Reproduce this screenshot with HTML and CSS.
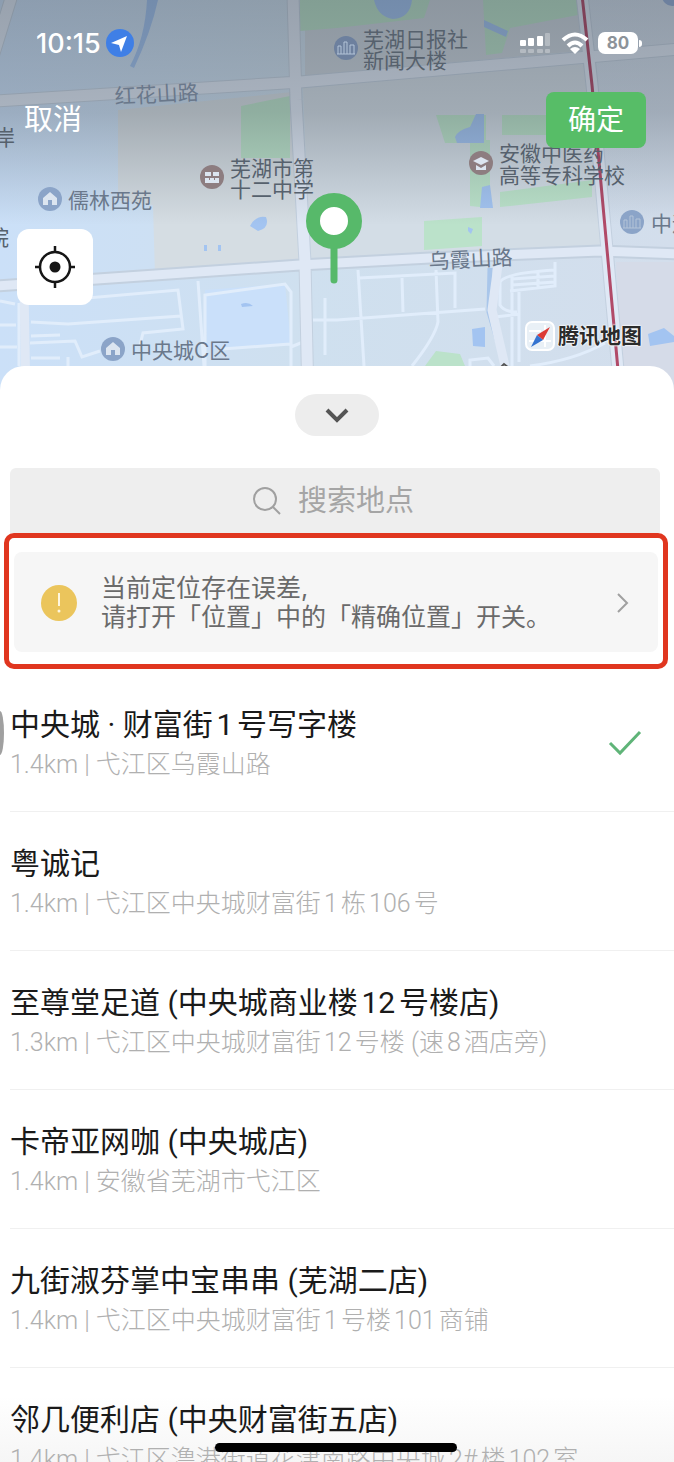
FILE: index.html
```html
<!DOCTYPE html>
<html lang="zh-CN">
<head>
  <meta charset="UTF-8" />
  <meta name="viewport" content="width=device-width, initial-scale=1.0"/>
  <title>选择位置</title>
  <link rel="stylesheet" href="styles.css">
</head>
<body>
  <div class="app">
    <section class="map">
      <svg class="map-canvas" viewBox="0 0 674 400" preserveAspectRatio="xMidYMin slice" aria-hidden="true">
        <defs>
          <linearGradient id="ground" x1="0" x2="1" y1="0" y2="0">
            <stop offset="0" stop-color="#cbe0f8"/>
            <stop offset="0.45" stop-color="#cfe0ef"/>
            <stop offset="1" stop-color="#d3deec"/>
          </linearGradient>
          <linearGradient id="shade" x1="0" x2="0" y1="0" y2="1">
            <stop offset="0" stop-color="#26303a" stop-opacity="0.38"/>
            <stop offset="0.5" stop-color="#26303a" stop-opacity="0.29"/>
            <stop offset="1" stop-color="#26303a" stop-opacity="0"/>
          </linearGradient>
        </defs>
        <rect width="674" height="400" fill="url(#ground)"/>

        <!-- blocks -->
        <path d="M118 110L292 92 299 262 155 276 153 205 118 200z" fill="#d5dde3"/>
        <path d="M303 88L595 60 604 246 310 262z" fill="#d3dde6"/>
        <path d="M305 0H580L590 50 305 76z" fill="#ccd5de"/>
        <path d="M616 262H674V400H622z" fill="#d5dbe8"/>
        <path d="M205 290L285 284 291 345 207 350z" fill="#cae0fa"/>

        <!-- parks -->
        <g fill="#bbe2ca">
          <path d="M241 106L290 96V158H241z"/>
          <path d="M300 0H430L424 18 337 28 300 31z"/>
          <path d="M483 0H578V15L510 28 502 53 486 55z"/>
          <path d="M436 115H486V143H445z"/>
          <path d="M502 115H556V135H502z"/>
          <path d="M424 221L482 217V246L424 250z"/>
          <path d="M470 140H490V208L470 206z"/>
          <path d="M500 192L592 180V197L500 207z"/>
          <path d="M425 366L436 351 460 354 465 366z"/>
        </g>

        <!-- water -->
        <g fill="#a3c4f1">
          <path d="M147 0H158Q151 32 134 68L130 66Q145 38 147 0z"/>
          <path d="M374 0H412Q410 18 393 19 378 17 374 0z"/>
          <path d="M484 20L508 31 506 37 484 27z"/>
          <path d="M455 137Q458 130 470 127L476 114H484V143H457z"/>
          <path d="M482 187L490 185 493 208 480 208z"/>
          <path d="M250 226Q256 215 266 217 270 228 258 231z"/>
          <path d="M204 245h3v6h-3zM218 245h3v6h-3zM468 227l5 2-2 5-3-3zM241 304q7-3 12 2l-11 1z"/>
          <path d="M472 329L485 327V347L473 346z"/>
          <path d="M648 334L664 328 674 336V342L650 346z"/>
        </g>
        <path d="M490 268L489 312 505 366" fill="none" stroke="#a9c6ea" stroke-width="5"/>

        <!-- lanes -->
        <path class="lane" d="M30 303L178 290 183 329 143 333 140 345M31 322L68 324 181 316M31 336L60 335M30 343L75 341 82 357 100 351M205 366V295L285 284 291 292V366M222 349L290 344M291 347L303 342M198 281L204 366M313 320H337L485 309M325 298V355M358 270L364 366M359 278L455 273V308M402 278L403 312M436 270L438 322Q435 337 412 366M500 282Q505 273 555 270V286L510 291M512 275V366M500 282V305Q504 312 517 312M519 290V362M538 272V288M512 279L555 276M512 285L555 282M555 262V270M495 317L520 314M470 370V360L488 358 494 366M530 366Q575 360 605 343M19 303V366M0 301L15 304M0 325H16M0 347H17M31 358L60 358M68 357V366"/>

        <!-- main roads -->
        <g class="road-edge">
          <path d="M-5 101L300 82 680 49M12 -5L-8 60M293 -5L296 100 305 262 308 400M-5 286L300 265 430 258 600 251 680 254"/>
          <path d="M582 -5L592 85 618 370 621 400"/>
        </g>
        <g class="road">
          <path d="M-5 101L300 82 680 49M12 -5L-8 60M293 -5L296 100 305 262 308 400"/>
          <path class="thin" d="M-5 286L300 265 430 258 600 251 680 254M24 288L26 400M498 265L492 310 505 366"/>
          <path d="M582 -5L592 85 618 370 621 400"/>
        </g>
        <path d="M582 -5L592 85 618 370 621 400" fill="none" stroke="#b14a68" stroke-width="3"/>

        <rect width="674" height="225" fill="url(#shade)"/>

        <!-- place icons -->
        <g fill="#8ba4c8">
          <circle cx="50" cy="199" r="12"/><circle cx="113" cy="349" r="12"/><circle cx="632" cy="222" r="12"/>
        </g>
        <circle cx="346" cy="48" r="12" fill="#6d809e"/>
        <circle cx="672" cy="-4" r="10" fill="#6d809e"/>
        <g fill="#8d7d80"><circle cx="212" cy="177" r="12"/><circle cx="481" cy="163" r="12"/></g>
        <g fill="#dce5f0">
          <path d="M50 192l7 6v7h-5v-5h-4v5h-5v-7zM113 342l7 6v7h-5v-5h-4v5h-5v-7z"/>
          <path d="M205 172h6v4h-6zM213 172h6v4h-6zM205 178h14v5h-14z"/>
          <path d="M473 161l8-4 8 4-8 4zM476 165l5 3 5-3v5h-10z"/>
        </g>
        <path d="M338 54v-8h3v8M344 54V42h3v12M350 54V45h4v9M337 54h18M624 228v-8h3v8M630 228v-12h3v12M636 228v-9h4v9M623 228h18" fill="none" stroke="#b4c4d8" stroke-width="1"/>
        <path d="M209 179h1M214 179h1" stroke="#8d7d80" stroke-width="2"/>

        <g class="place">
          <text x="363" y="47">芜湖日报社</text>
          <text x="363" y="68">新闻大楼</text>
          <text x="230" y="176">芜湖市第</text>
          <text x="230" y="197">十二中学</text>
          <text x="499" y="161">安徽中医药</text>
          <text x="499" y="183">高等专科学校</text>
          <text x="-6" y="145">岸</text>
          <text x="-12" y="245">院</text>
          <text class="soft" x="68" y="208">儒林西苑</text>
          <text class="soft" x="131" y="358">中央城C区</text>
          <text class="soft" x="651" y="231">中远</text>
          <text class="soft" transform="translate(115 104) rotate(-3)">红花山路</text>
          <text class="soft" transform="translate(429 269) rotate(-3)">乌霞山路</text>
        </g>
        <path d="M500 368l4-4 5 4" fill="none" stroke="#555" stroke-width="2"/>

        <!-- selected point -->
        <path d="M334 240V280" stroke="#57b96a" stroke-width="7" stroke-linecap="round"/>
        <circle cx="334" cy="221" r="21" fill="#fff" stroke="#57b96a" stroke-width="14"/>
      </svg>

      <div class="status-bar">
        <div class="clock">
          <span>10:15</span>
          <svg width="28" height="28" viewBox="0 0 28 28" aria-hidden="true">
            <circle cx="14" cy="14" r="14" fill="#3f7fe6"/>
            <path d="M21 7L5 14l8 2 2 7z" fill="#fff"/>
          </svg>
        </div>
        <div class="signals">
          <svg width="32" height="22" viewBox="0 0 32 22" aria-hidden="true">
            <g fill="#fff">
              <rect x="0" y="8" width="6" height="6" rx="1"/><rect x="8" y="6" width="6" height="8" rx="1"/><rect x="17" y="4" width="6" height="10" rx="1"/>
              <g opacity="0.3"><rect x="25" y="1" width="5" height="13" rx="1"/><rect x="0" y="17" width="6" height="4" rx="1"/><rect x="8" y="17" width="6" height="4" rx="1"/><rect x="17" y="17" width="6" height="4" rx="1"/><rect x="25" y="17" width="5" height="4" rx="1"/></g>
            </g>
          </svg>
          <svg width="28" height="22" viewBox="0 0 28 22" fill="none" stroke="#fff" stroke-width="4" aria-hidden="true">
            <path d="M2 8Q14 -3 26 8M7 14Q14 7 21 14"/>
            <path d="M14 22l-5-5q5-4 10 0z" fill="#fff" stroke="none"/>
          </svg>
          <span class="battery">80</span>
        </div>
      </div>

      <div class="actions">
        <button class="cancel" type="button">取消</button>
        <button class="confirm" type="button">确定</button>
      </div>

      <button class="locate" type="button" aria-label="我的位置">
        <svg width="40" height="42" viewBox="0 0 40 42" fill="none" stroke="#161616" stroke-width="2.5" aria-hidden="true">
          <circle cx="20" cy="21" r="15"/>
          <path d="M20 0v7M20 35v7M0 21h6M34 21h6"/>
          <circle cx="20" cy="21" r="5.5" fill="#161616" stroke="none"/>
        </svg>
      </button>

      <div class="brand">
        <svg width="30" height="30" viewBox="0 0 30 30" aria-hidden="true">
          <rect x="1" y="1" width="28" height="28" rx="6" fill="#e9f0f6" stroke="#fff" stroke-width="2"/>
          <path d="M4 20h22M20 4v22M4 10h12" stroke="#fff" stroke-width="2"/>
          <path d="M25 6L12 14l6 5z" fill="#dc3b36"/>
          <path d="M6 26l6-12 6 5z" fill="#3674d0"/>
        </svg>
        <span>腾讯地图</span>
      </div>
    </section>

    <main class="sheet">
      <button class="collapse" type="button" aria-label="收起">
        <svg width="24" height="16" viewBox="0 0 24 16" fill="none" stroke="#555" stroke-width="4" aria-hidden="true">
          <path d="M2 3l10 10L22 3"/>
        </svg>
      </button>

      <label class="search">
        <svg width="30" height="30" viewBox="0 0 30 30" fill="none" stroke="#a0a0a0" stroke-width="2" aria-hidden="true">
          <circle cx="13" cy="13" r="11"/>
          <path d="M21 21l7 7"/>
        </svg>
        <input type="text" placeholder="搜索地点" aria-label="搜索地点">
      </label>

      <div class="highlight">
        <a class="notice" href="#">
          <svg width="36" height="36" viewBox="0 0 36 36" aria-hidden="true">
            <circle cx="18" cy="18" r="18" fill="#ebc55c"/>
            <path d="M18 8v13" stroke="#fff7df" stroke-width="2"/>
            <circle cx="18" cy="26" r="1.5" fill="#fff7df"/>
          </svg>
          <span class="notice-text">当前定位存在误差,<br>请打开「位置」中的「精确位置」开关。</span>
          <svg width="12" height="20" viewBox="0 0 12 20" fill="none" stroke="#a0a0a0" stroke-width="2" aria-hidden="true">
            <path d="M1 1l9 9-9 9"/>
          </svg>
        </a>
      </div>

      <ul class="places">
        <li class="selected">
          <div>
            <h2>中央城 · 财富街1号写字楼</h2>
            <p>1.4km | 弋江区乌霞山路</p>
          </div>
          <svg width="34" height="26" viewBox="0 0 34 26" fill="none" stroke="#5fb478" stroke-width="3" aria-hidden="true">
            <path d="M2 13l10 10L32 2"/>
          </svg>
        </li>
        <li>
          <h2>粤诚记</h2>
          <p>1.4km | 弋江区中央城财富街1栋106号</p>
        </li>
        <li>
          <h2>至尊堂足道 (中央城商业楼12号楼店)</h2>
          <p>1.3km | 弋江区中央城财富街12号楼 (速8酒店旁)</p>
        </li>
        <li>
          <h2>卡帝亚网咖 (中央城店)</h2>
          <p>1.4km | 安徽省芜湖市弋江区</p>
        </li>
        <li>
          <h2>九街淑芬掌中宝串串 (芜湖二店)</h2>
          <p>1.4km | 弋江区中央城财富街1号楼101商铺</p>
        </li>
        <li>
          <h2>邻几便利店 (中央财富街五店)</h2>
          <p>1.4km | 弋江区澛港街道花津南路中央城2#楼102室</p>
        </li>
      </ul>
    </main>

    <div class="assist"></div>
    <div class="home-indicator"></div>
  </div>
</body>
</html>
```
FILE: styles.css
```css
* {
  box-sizing: border-box;
}
body {
  margin: 0;
  font-family: Inter, 'Noto Sans CJK SC', sans-serif;
  background: #fff;
  color: #1a1a1a;
}
button {
  border: none;
  padding: 0;
  font-family: inherit;
  cursor: pointer;
}
svg {
  display: block;
  flex: none;
}
.app {
  position: relative;
  display: flex;
  flex-direction: column;
  height: 100vh;
  overflow: hidden;
}

/* map */
.map {
  position: relative;
  flex: none;
  height: 390px;
  padding-top: 28px;
  overflow: hidden;
}
.map-canvas {
  position: absolute;
  top: 0;
  left: 0;
  width: 100%;
  height: 400px;
}
.lane {
  fill: none;
  stroke: #e1edfb;
  stroke-width: 3;
}
.road path {
  fill: none;
  stroke: #dfe8f5;
  stroke-width: 11;
}
.road .thin {
  stroke-width: 9;
}
.road-edge path {
  fill: none;
  stroke: #c3d0df;
  stroke-width: 13;
}
.place {
  font-size: 21px;
  fill: #56616d;
}
.place .soft {
  fill: #6a788b;
}
.status-bar,
.actions {
  position: relative;
  display: flex;
  justify-content: space-between;
  align-items: center;
}
.status-bar {
  height: 30px;
  padding: 0 36px;
  color: #fff;
}
.clock {
  display: flex;
  align-items: center;
  gap: 5px;
  font-size: 27px;
  font-weight: 500;
}
.signals {
  display: flex;
  align-items: center;
  gap: 9px;
}
.battery {
  position: relative;
  width: 40px;
  border-radius: 7px;
  background: #fff;
  color: #8d9399;
  font-size: 17px;
  font-weight: 700;
  line-height: 22px;
  text-align: center;
}
.battery::after {
  content: "";
  position: absolute;
  top: 8px;
  right: -4px;
  width: 3px;
  height: 7px;
  border-radius: 0 3px 3px 0;
  background: #fff;
}
.actions {
  margin-top: 34px;
  padding: 0 28px 0 24px;
}
.cancel,
.confirm {
  color: #fff;
  font-size: 29px;
  line-height: 56px;
}
.cancel {
  background: none;
}
.confirm {
  width: 100px;
  border-radius: 8px;
  background: #57bd67;
  font-size: 28px;
}
.locate {
  position: relative;
  display: flex;
  align-items: center;
  justify-content: center;
  width: 76px;
  height: 76px;
  margin: 81px 0 0 17px;
  border-radius: 12px;
  background: #fff;
}
.brand {
  position: absolute;
  top: 321px;
  right: 32px;
  display: flex;
  align-items: center;
  gap: 3px;
  font-size: 21px;
  font-weight: 700;
  line-height: 30px;
  color: #2b2b2b;
  text-shadow: 0 0 2px #fff, 0 0 2px #fff, 0 0 2px #fff;
}

/* bottom sheet */
.sheet {
  position: relative;
  flex: 1;
  min-height: 0;
  margin-top: -24px;
  padding-top: 28px;
  overflow: hidden;
  border-radius: 24px 24px 0 0;
  background: linear-gradient(#fff 94%, #f6f6f6);
}
.collapse {
  display: flex;
  align-items: center;
  justify-content: center;
  width: 84px;
  height: 42px;
  margin: 0 auto 32px;
  border-radius: 21px;
  background: #ededed;
}
.search {
  display: flex;
  align-items: center;
  justify-content: center;
  gap: 16px;
  height: 65px;
  margin: 0 14px 0 10px;
  border-radius: 6px 6px 0 0;
  background: #eee;
}
.search input {
  width: 120px;
  padding: 0;
  border: none;
  outline: none;
  background: none;
  font-family: inherit;
  font-size: 29px;
}
.search input::placeholder {
  color: #a5a5a5;
}
.highlight {
  margin: 0 6px 0 4px;
  padding: 14px 5px 12px;
  border: 5px solid #e0361f;
  border-radius: 10px;
}
.notice {
  display: flex;
  align-items: center;
  gap: 24px;
  padding: 22px 29px 20px 27px;
  border-radius: 8px;
  background: #f6f6f6;
  color: #6a6a6a;
  font-size: 25px;
  line-height: 29px;
  text-decoration: none;
}
.notice-text {
  flex: 1;
  white-space: nowrap;
}
.places {
  margin: 0;
  padding: 4px 0 0 10px;
  list-style: none;
  white-space: nowrap;
  text-autospace: normal;
  font-family: Roboto, 'Noto Sans CJK SC', sans-serif;
}
.places li {
  padding: 30px 0 28px;
  border-bottom: 1px solid #f0f0f0;
}
.places .selected {
  display: flex;
  align-items: center;
  justify-content: space-between;
  padding-right: 32px;
}
.places h2 {
  margin: 0;
  font-size: 30px;
  font-weight: 400;
  line-height: 44px;
}
.places p {
  margin: 0;
  color: #b0b0b0;
  font-size: 25px;
  font-weight: 300;
  line-height: 36px;
}

/* system overlays */
.assist {
  position: absolute;
  top: 711px;
  left: 0;
  width: 4px;
  height: 44px;
  border-radius: 0 4px 4px 0 / 0 22px 22px 0;
  background: #a0a0a0;
}
.home-indicator {
  position: absolute;
  bottom: 10px;
  left: 50%;
  width: 242px;
  height: 9px;
  margin-left: -122px;
  border-radius: 5px;
  background: #000;
}
```
